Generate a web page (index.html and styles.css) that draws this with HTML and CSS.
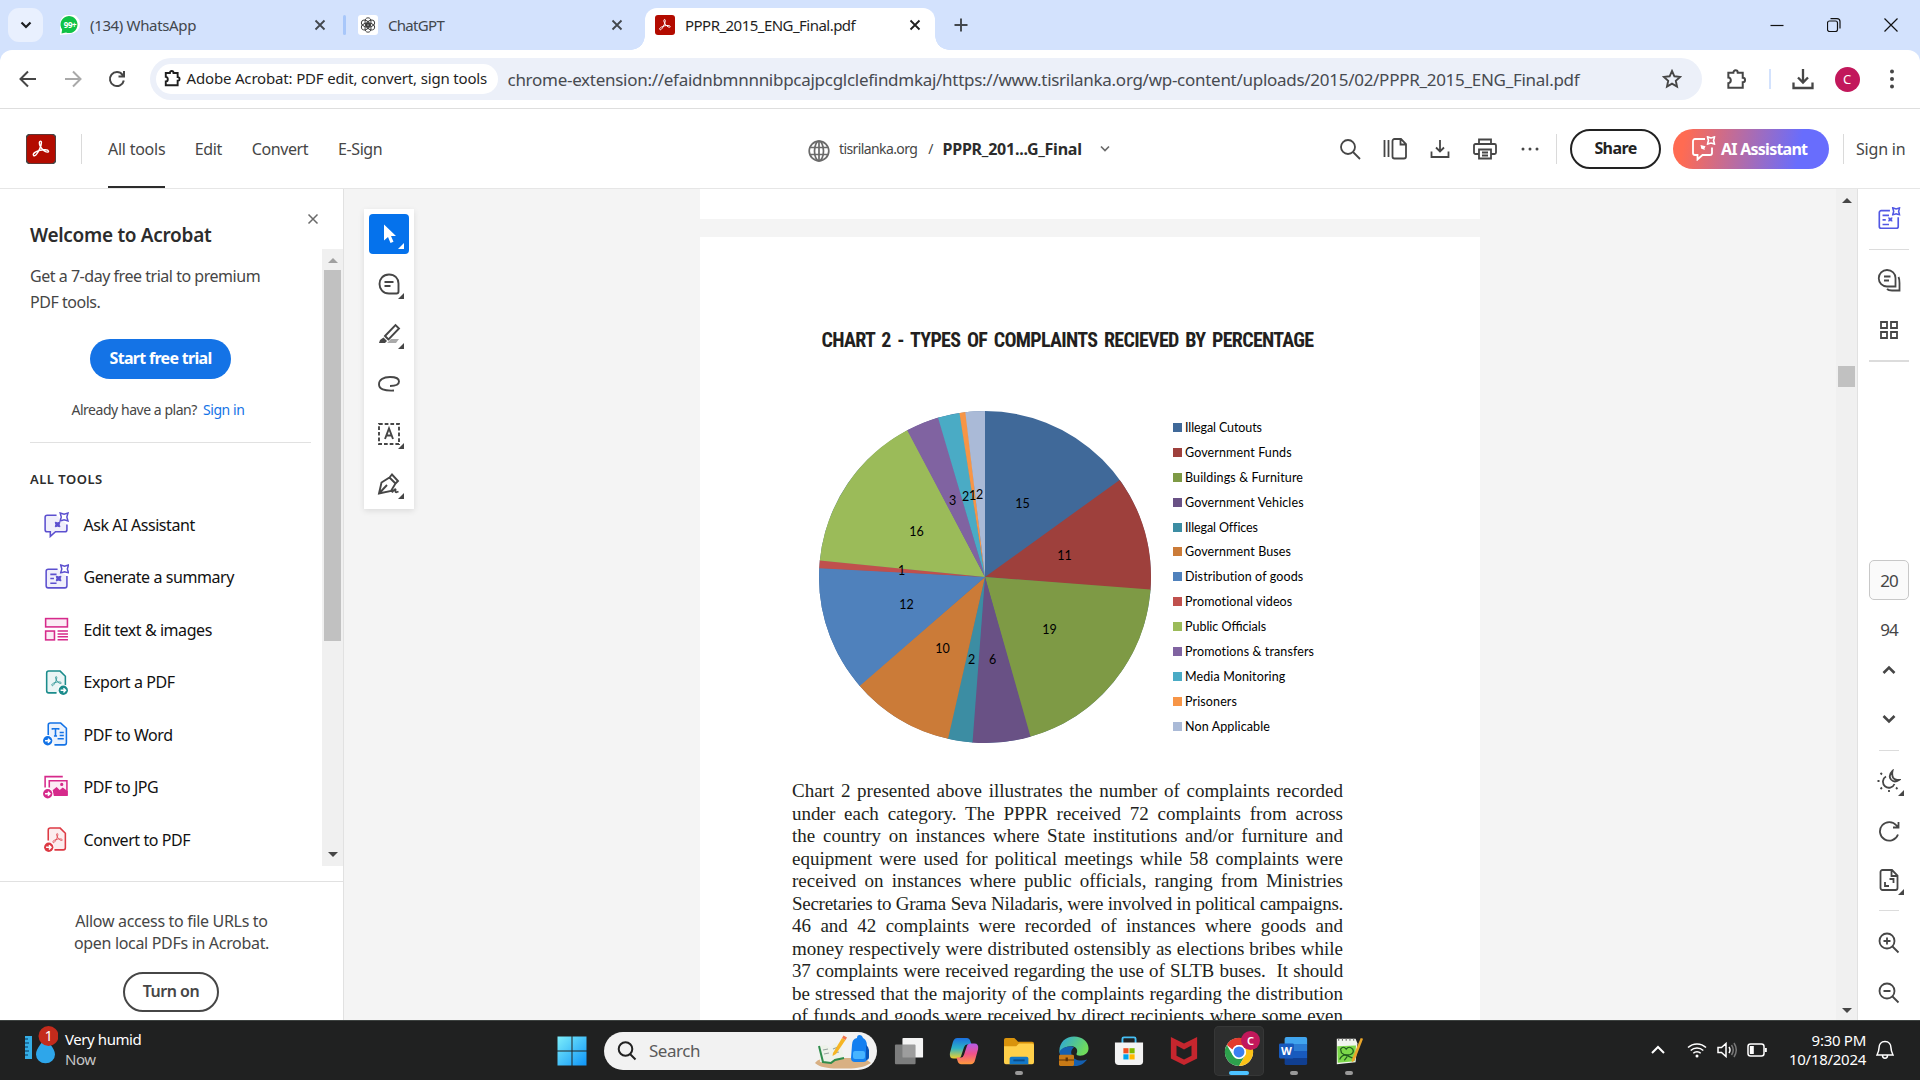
FILE: index.html
```html
<!DOCTYPE html>
<html lang="en">
<head>
<meta charset="utf-8">
<title>PPPR_2015_ENG_Final.pdf</title>
<link rel="stylesheet" href="styles.css">
</head>
<body>
<svg class="defs" aria-hidden="true">
  <symbol id="x" viewBox="0 0 12 12"><path d="M1.5 1.5l9 9M10.5 1.5l-9 9"/></symbol>
  <symbol id="puzzle" viewBox="0 0 24 24"><path d="M3.5 5h5.2c0-3.4 4.6-3.4 4.6 0h5.2v5.2c3.2 0 3.2 4.6 0 4.6V20.500h-15v-4.700c3.400 0 3.400-5.800 0-5.800z"/></symbol>
  <symbol id="trefoil" viewBox="0 0 24 24"><path d="M3 19.500c-1.500-2 3.500-5 8-6 4-1 9.500-1 10 1 .4 2-3 1.500-5.500-.5C12.500 11.500 10 7 10 4.500 10 2 12.500 1.700 12.500 4.500c0 4-3.500 11-6 14-1.200 1.500-2.700 2.200-3.500 1z"/></symbol>
  <symbol id="corner" viewBox="0 0 6 6"><path d="M6 0v6H0z"/></symbol>
  <symbol id="spark" viewBox="0 0 10 10"><path d="M1 1l4 1.200L9 1 7.800 5 9 9 5 7.800 1 9l1.200-4z"/></symbol>
  <symbol id="go" viewBox="0 0 12 12"><circle class="ring" cx="6" cy="6" r="6"/><circle cx="6" cy="6" r="4.900"/><path class="arrow" d="M3.200 6h5M6.200 3.800L8.400 6 6.200 8.200"/></symbol>
  <symbol id="down" viewBox="0 0 20 20"><path d="M10 1v11M6 8.500l4 4 4-4M1.500 12.500V18h17v-5.500"/></symbol>
</svg>

<header class="tabstrip">
  <button class="tabsearch"><svg width="12" height="12" viewBox="0 0 12 12"><path d="M1.500 3.500L6 8l4.500-4.500"/></svg></button>
  <div class="tab">
    <svg width="20" height="20" viewBox="0 0 20 20"><path d="M0 20V10A10 10 0 1 1 10 19z" fill="#fff"/><path d="M1.500 18.500l.6-4A8.500 8.500 0 1 1 6 17.500z" fill="#10c246"/><text x="10" y="13" class="wa">99+</text></svg>
    <span class="t-wa">(134) WhatsApp</span>
    <svg class="close" width="12" height="12"><use href="#x"/></svg>
  </div>
  <i class="tabline"></i>
  <div class="tab second">
    <svg width="20" height="20" viewBox="0 0 20 20"><rect width="20" height="20" rx="3" fill="#fff"/><g class="knot"><ellipse cx="10" cy="7" rx="3" ry="4.200"/><ellipse cx="10" cy="7" rx="3" ry="4.200" transform="rotate(60 10 10)"/><ellipse cx="10" cy="7" rx="3" ry="4.200" transform="rotate(120 10 10)"/><ellipse cx="10" cy="7" rx="3" ry="4.200" transform="rotate(180 10 10)"/><ellipse cx="10" cy="7" rx="3" ry="4.200" transform="rotate(240 10 10)"/><ellipse cx="10" cy="7" rx="3" ry="4.200" transform="rotate(300 10 10)"/></g></svg>
    <span class="t-gpt">ChatGPT</span>
    <svg class="close" width="12" height="12"><use href="#x"/></svg>
  </div>
  <div class="tab active">
    <svg width="20" height="20" viewBox="0 0 20 20"><rect width="20" height="20" rx="3" fill="#b30b00"/><use href="#trefoil" x="3" y="3" width="14" height="14" class="tre"/></svg>
    <span class="t-pdf">PPPR_2015_ENG_Final.pdf</span>
    <svg class="close" width="12" height="12"><use href="#x"/></svg>
  </div>
  <svg class="plus" width="14" height="14" viewBox="0 0 14 14"><path d="M7 .500v13M.500 7h13"/></svg>
  <div class="wincontrols">
    <svg width="14" height="14" viewBox="0 0 14 14"><path d="M.500 7.500h13"/></svg>
    <svg width="14" height="14" viewBox="0 0 14 14"><rect x=".500" y="3" width="10" height="10.500" rx="2"/><path d="M3.500.600H10a3 3 0 0 1 3 3v7"/></svg>
    <svg width="14" height="14" viewBox="0 0 14 14"><path d="M.500.500l13 13M13.500.500l-13 13"/></svg>
  </div>
</header>

<div class="toolbar-wrap">
<nav class="toolbar">
  <svg class="nav" width="18" height="18" viewBox="0 0 18 18"><path d="M17 9H2M9 1.500L1.500 9 9 16.500"/></svg>
  <svg class="nav off" width="18" height="18" viewBox="0 0 18 18"><path d="M1 9h15M9 1.500L16.500 9 9 16.500"/></svg>
  <svg class="nav" width="18" height="18" viewBox="0 0 18 18"><path d="M15.800 10.500a7 7 0 1 1-1.300-5.700L16 6.500M16 1v5.500h-5.500"/></svg>
  <div class="omnibox">
    <span class="chip"><svg width="19" height="19"><use href="#puzzle"/></svg><span>Adobe Acrobat: PDF edit, convert, sign tools</span></span>
    <span class="url">chrome-extension://efaidnbmnnnibpcajpcglclefindmkaj/https://www.tisrilanka.org/wp-content/uploads/2015/02/PPPR_2015_ENG_Final.pdf</span>
    <svg class="star" width="20" height="20" viewBox="0 0 20 20"><path d="M10 2l2.400 5.300 5.700.600-4.300 3.900 1.200 5.700-5-2.900-5 2.900 1.200-5.700L1.900 7.900l5.700-.600z"/></svg>
  </div>
  <svg class="ext" width="23" height="23"><use href="#puzzle"/></svg>
  <i class="toolline"></i>
  <svg class="dl" width="22" height="22" viewBox="0 0 22 22"><path d="M11 1v13M6 9.500l5 5 5-5M1.500 14.500V20h19v-5.500"/></svg>
  <span class="avatar">C</span>
  <svg class="kebab" width="6" height="20" viewBox="0 0 6 20"><circle cx="3" cy="2.500" r="2"/><circle cx="3" cy="10" r="2"/><circle cx="3" cy="17.500" r="2"/></svg>
</nav>
</div>

<header class="acro">
  <div class="acro-left">
    <svg width="30" height="30" viewBox="0 0 30 30"><rect width="30" height="30" rx="5" fill="#b30b00"/><use href="#trefoil" x="5" y="5" width="20" height="20" class="tre"/></svg>
    <i class="vline"></i>
    <a class="sel">All tools</a><a>Edit</a><a>Convert</a><a>E-Sign</a>
  </div>
  <div class="acro-mid">
    <svg width="22" height="22" viewBox="0 0 22 22"><circle cx="11" cy="11" r="9.800"/><ellipse cx="11" cy="11" rx="4.500" ry="9.800"/><path d="M11 1v20M1.800 7.500h18.400M1.800 14.500h18.400"/></svg>
    <span class="site">tisrilanka.org</span><span class="slash">/</span><b>PPPR_201...G_Final</b>
    <svg class="chev" width="10" height="8" viewBox="0 0 10 8"><path d="M1 1.500l4 4 4-4"/></svg>
  </div>
  <div class="acro-right">
    <svg width="22" height="22" viewBox="0 0 22 22"><circle cx="9" cy="9" r="7"/><path d="M14 14l7 7"/></svg>
    <svg width="24" height="22" viewBox="0 0 24 22"><path d="M1.500 2v17M5.500 2v17M9.500 3a2 2 0 0 1 2-2h6.500l5 5v12.500a2 2 0 0 1-2 2h-9.500a2 2 0 0 1-2-2zM17.500 1.500V6.500H23"/></svg>
    <svg class="save" width="20" height="20"><use href="#down"/></svg>
    <svg width="24" height="22" viewBox="0 0 24 22"><path d="M6 6V1.500h12V6M5.500 16H2.500a1.500 1.500 0 0 1-1.500-1.500V7.500A1.500 1.500 0 0 1 2.500 6h19A1.500 1.500 0 0 1 23 7.500v7a1.500 1.500 0 0 1-1.500 1.500h-3M6 11.500h12V20.500H6zM9 14.500h6M9 17.500h6"/></svg>
    <svg class="dots" width="18" height="6" viewBox="0 0 18 6"><circle cx="2" cy="3" r="1.500"/><circle cx="9" cy="3" r="1.500"/><circle cx="16" cy="3" r="1.500"/></svg>
    <i class="vline"></i>
    <button class="share">Share</button>
    <button class="ai"><svg width="25" height="25" viewBox="0 0 25 25"><path d="M14 3H4a2 2 0 0 0-2 2v12a2 2 0 0 0 2 2h2.500v4.500L11.500 19H19a2 2 0 0 0 2-2v-5.500"/><use href="#spark" x="15.500" y="0" width="9" height="9"/><path class="f" d="M9.500 9l5 1.200L13.300 13l1 1-4-1.200z"/></svg><span>AI Assistant</span></button>
    <i class="vline last"></i>
    <a>Sign in</a>
  </div>
</header>

<main>
  <aside class="side">
    <div class="side-top">
      <h1>Welcome to Acrobat</h1>
      <svg width="12" height="12"><use href="#x"/></svg>
    </div>
    <div class="side-body">
      <div class="side-content">
        <p class="intro">Get a 7-day free trial to premium<br>PDF tools.</p>
        <button class="trial">Start free trial</button>
        <p class="plan">Already have a plan?<a>Sign in</a></p>
        <h2>ALL TOOLS</h2>
        <ul class="tools">
          <li><svg class="purple" viewBox="0 0 26 26"><path class="t" d="M14 4H5a2 2 0 0 0-2 2v12a2 2 0 0 0 2 2h3v4.500L13 20h9a2 2 0 0 0 2-2v-5"/><use href="#spark" x="16.500" y="1" width="9.500" height="9.500"/><use href="#spark" x="12" y="10" width="6" height="6" class="solid"/></svg><span>Ask AI Assistant</span></li>
          <li><svg class="purple" viewBox="0 0 26 26"><path class="t" d="M15 5H6a2 2 0 0 0-2 2v14a2 2 0 0 0 2 2h16a2 2 0 0 0 2-2v-9.500"/><path d="M8 10h6M8 14h3.500M8 18.500h6"/><use href="#spark" x="17" y="0" width="9.500" height="9.500"/><use href="#spark" x="13" y="11" width="6" height="6" class="solid"/></svg><span>Generate a summary</span></li>
          <li><svg class="pink" viewBox="0 0 26 26"><rect class="t" x="3.500" y="2.500" width="21" height="8"/><rect class="t" x="3.500" y="14.500" width="8.500" height="8.500"/><path d="M15 14.500h10M15 17.300h10M15 20h10M15 22.900h10"/></svg><span>Edit text &amp; images</span></li>
          <li><svg class="teal" viewBox="0 0 26 26"><path class="t" d="M14 23H6.500a2 2 0 0 1-2-2V4a2 2 0 0 1 2-2h11l5 5v9"/><use href="#trefoil" x="8" y="6" width="12" height="12"/><use href="#go" x="15" y="15" width="11" height="11" class="go"/></svg><span>Export a PDF</span></li>
          <li><svg class="blue" viewBox="0 0 26 26"><path class="t" d="M6 14V4a2 2 0 0 1 2-2h10l5.500 5v14a2 2 0 0 1-2 2H12"/><path d="M10 8.500V7.500h6v1M13 7.500v7M11.500 14.500h3M17 11h4M17 14h4M15 17h6"/><use href="#go" x="0" y="13.500" width="11" height="11" class="go"/></svg><span>PDF to Word</span></li>
          <li><svg class="pink" viewBox="0 0 26 26"><path d="M3 13V2.500h17"/><path class="t" d="M7 13V6.500h17V20H12"/><path class="f" d="M11 16l3-2.500 3 3 3-2.500 4 3v3.500H12z"/><circle cx="19" cy="10" r=".8"/><use href="#go" x="0" y="13.500" width="11" height="11" class="go"/></svg><span>PDF to JPG</span></li>
          <li><svg class="red" viewBox="0 0 26 26"><path class="t" d="M6 14V4a2 2 0 0 1 2-2h9.500l5 5v14a2 2 0 0 1-2 2H12"/><use href="#trefoil" x="9" y="6" width="12" height="12"/><use href="#go" x="1" y="15" width="11" height="11" class="go"/></svg><span>Convert to PDF</span></li>
        </ul>
      </div>
      <div class="scroll side-scroll"><i class="up dim"></i><b></b><i class="down"></i></div>
    </div>
    <footer class="allow">
      <p>Allow access to file URLs to<br>open local PDFs in Acrobat.</p>
      <button>Turn on</button>
    </footer>
  </aside>

  <section class="viewer">
    <div class="quick">
      <span class="on"><svg width="40" height="40" viewBox="0 0 40 40"><path d="M15 10.500v16l4-3.500 2.500 6 3-1.300-2.500-5.700h5z" fill="#fff"/></svg><svg class="corner"><use href="#corner"/></svg></span>
      <span><svg width="24" height="24" viewBox="0 0 24 24"><path d="M12 2.500c6 0 9.500 4 9.500 9v8a2 2 0 0 1-2 2H12C6 21.500 2.500 17 2.500 12S6 2.500 12 2.500zM7.500 10h9M7.500 14h6"/></svg><svg class="corner"><use href="#corner"/></svg></span>
      <span><svg width="24" height="24" viewBox="0 0 24 24"><path d="M14 17h8l-3 4H10z" fill="#aaa" stroke="none"/><path d="M8 14L18.500 3l3.500 3.500L11.500 17.500zM8 14l3.500 3.500"/><path d="M6.500 15.500l3.500 3.500-2 2H2l1-3z" fill="#464646" stroke="none"/></svg><svg class="corner"><use href="#corner"/></svg></span>
      <span><svg width="24" height="24" viewBox="0 0 24 24"><path d="M13 14c5 0 9-1.500 9-4.500C22 6.500 18 5 13 5 6 5 2 8 2 12.500S7 19 17 18.500"/></svg></span>
      <span><svg width="24" height="24" viewBox="0 0 24 24"><rect x="2" y="2" width="20" height="20" stroke-dasharray="3.700 2"/><path d="M8 17l4-10.500L16 17M9.500 13.500h5"/></svg><svg class="corner"><use href="#corner"/></svg></span>
      <span><svg width="24" height="24" viewBox="0 0 24 24"><path d="M2 21.500L4.500 10.500 12.500 5.500l6 6-4.500 7.500zM2 21.500l8-8.500M12.500 5.500L15 2.500 21 9l-2.500 2.500M15 20.500c2-3 4-4 3.500-2.500-.5 2 0 3 3 1.500"/></svg><svg class="corner"><use href="#corner"/></svg></span>
    </div>
    <div class="pages">
      <div class="sheet prev"></div>
      <article class="sheet">
        <h3>CHART 2 - TYPES OF COMPLAINTS RECIEVED BY PERCENTAGE</h3>
        <div class="chart">
          <svg class="pie" width="332" height="332" viewBox="-166 -166 332 332">
            <g class="slices" transform="rotate(-90)">
              <circle r="83" pathLength="360" stroke="#406999"/>
              <circle r="83" pathLength="360" stroke="#9e403c" stroke-dasharray="40.500 360" stroke-dashoffset="-54.200"/>
              <circle r="83" pathLength="360" stroke="#7e9a45" stroke-dasharray="69.900 360" stroke-dashoffset="-94.400"/>
              <circle r="83" pathLength="360" stroke="#695185" stroke-dasharray="20.600 360" stroke-dashoffset="-164"/>
              <circle r="83" pathLength="360" stroke="#3c8da3" stroke-dasharray="8.700 360" stroke-dashoffset="-184.400"/>
              <circle r="83" pathLength="360" stroke="#cb7b38" stroke-dasharray="36.300 360" stroke-dashoffset="-192.900"/>
              <circle r="83" pathLength="360" stroke="#4f81bc" stroke-dasharray="44.300 360" stroke-dashoffset="-229"/>
              <circle r="83" pathLength="360" stroke="#c0504d" stroke-dasharray="2.900 360" stroke-dashoffset="-273.100"/>
              <circle r="83" pathLength="360" stroke="#9bbb59" stroke-dasharray="56.400 360" stroke-dashoffset="-275.800"/>
              <circle r="83" pathLength="360" stroke="#8063a1" stroke-dasharray="11.700 360" stroke-dashoffset="-332"/>
              <circle r="83" pathLength="360" stroke="#4aabc5" stroke-dasharray="7.800 360" stroke-dashoffset="-343.500"/>
              <circle r="83" pathLength="360" stroke="#f79546" stroke-dasharray="2.200 360" stroke-dashoffset="-351.100"/>
              <circle r="83" pathLength="360" stroke="#aabad7" stroke-dasharray="6.900 360" stroke-dashoffset="-353.100"/>
            </g>
            <g class="nums">
              <text x="37.500" y="-69">15</text><text x="79.500" y="-17">11</text><text x="64.500" y="57">19</text><text x="7.500" y="87">6</text><text x="-13.500" y="87">2</text><text x="-42.500" y="76">10</text><text x="-78.500" y="32">12</text><text x="-83.500" y="-2">1</text><text x="-68.500" y="-41">16</text><text x="-32.500" y="-72">3</text><text x="-19.500" y="-76">2</text><text x="-12.500" y="-77">1</text><text x="-5.500" y="-78">2</text>
            </g>
          </svg>
          <ul class="legend">
            <li class="c1">Illegal Cutouts</li><li class="c2">Government Funds</li><li class="c3">Buildings &amp; Furniture</li><li class="c4">Government Vehicles</li><li class="c5">Illegal Offices</li><li class="c6">Government Buses</li><li class="c7">Distribution of goods</li><li class="c8">Promotional videos</li><li class="c9">Public Officials</li><li class="c10">Promotions &amp; transfers</li><li class="c11">Media Monitoring</li><li class="c12">Prisoners</li><li class="c13">Non Applicable</li>
          </ul>
        </div>
        <div class="prose">
          <p>Chart 2 presented above illustrates the number of complaints recorded</p>
          <p>under each category. The PPPR received 72 complaints from across</p>
          <p>the country on instances where State institutions and/or furniture and</p>
          <p>equipment were used for political meetings while 58 complaints were</p>
          <p>received on instances where public officials, ranging from Ministries</p>
          <p class="tight">Secretaries to Grama Seva Niladaris, were involved in political campaigns.</p>
          <p>46 and 42 complaints were recorded of instances where goods and</p>
          <p>money respectively were distributed ostensibly as elections bribes while</p>
          <p class="close-set">37 complaints were received regarding the use of SLTB buses.&nbsp; It should</p>
          <p class="snug">be stressed that the majority of the complaints regarding the distribution</p>
          <p>of funds and goods were received by direct recipients where some even</p>
        </div>
      </article>
    </div>
    <div class="scroll doc-scroll"><i class="up"></i><b></b><i class="down"></i></div>
  </section>

  <aside class="rail">
    <svg class="r-sum" width="24" height="24" viewBox="0 0 26 26"><path d="M14 4H4.500a2 2 0 0 0-2 2v15a2 2 0 0 0 2 2H21a2 2 0 0 0 2-2V11M6 9h7M6 14h3.500M6 19h7"/><use href="#spark" x="16" y="0" width="9.500" height="9.500"/><use href="#spark" x="12" y="11" width="5" height="5" class="solid"/></svg>
    <i class="l1"></i>
    <svg class="r-com" width="24" height="24" viewBox="0 0 24 24"><path d="M10 2c5 0 8.500 3.500 8.500 8v8.500H10A8.200 8.200 0 1 1 10 2zM7 8.500h6.500M7 12.500h5M21.500 9c1 2 1 4 1 6v7.500H15c-2 0-3.500 0-5-1.500"/></svg>
    <svg class="r-grid" width="20" height="20" viewBox="0 0 20 20"><path d="M2 2h6v6H2zM12 2h6v6h-6zM2 12h6v6H2zM12 12h6v6h-6z"/></svg>
    <i class="l2"></i>
    <span class="pg">20</span>
    <span class="tot">94</span>
    <svg class="r-up" width="14" height="10" viewBox="0 0 14 10"><path d="M1.500 8L7 2.500 12.500 8"/></svg>
    <svg class="r-dn" width="14" height="10" viewBox="0 0 14 10"><path d="M1.500 2L7 7.500 12.500 2"/></svg>
    <i class="l3"></i>
    <span class="r-sun"><svg width="24" height="24" viewBox="0 0 24 24"><path d="M9 7.500a6 6 0 1 0 8.500 7.500M15.500 2c-3 3-3.500 6-1.500 8.500 2 2.200 5 2.500 8 .5-3 0-5-.7-6-2.500-1-2-1-4-.5-6.500zM3.500 4L5 5.500M.500 12h2M3.500 20L5 18.500M12 21v2M19 18.500l1.500 1.500"/></svg><svg class="corner"><use href="#corner"/></svg></span>
    <svg class="r-rot" width="22" height="22" viewBox="0 0 22 22"><path d="M20 14.500A9.300 9.300 0 1 1 18.500 5.500L20.500 7.500M20.500 2v5.500H15"/></svg>
    <span class="r-fit"><svg width="22" height="24" viewBox="0 0 22 24"><path d="M2.500 4a2 2 0 0 1 2-2H14l5.500 5.500V20a2 2 0 0 1-2 2h-13a2 2 0 0 1-2-2zM13.500 2.500V8H19M11.500 11h4v4M7 14v4h4"/></svg><svg class="corner"><use href="#corner"/></svg></span>
    <i class="l4"></i>
    <svg class="r-zin" width="22" height="22" viewBox="0 0 22 22"><circle cx="9" cy="9" r="7.500"/><path d="M14.500 14.500l6 6M5.500 9h7M9 5.500v7"/></svg>
    <svg class="r-zout" width="22" height="22" viewBox="0 0 22 22"><circle cx="9" cy="9" r="7.500"/><path d="M14.500 14.500l6 6M5.500 9h7"/></svg>
  </aside>
</main>

<footer class="taskbar">
  <div class="weather">
    <svg width="34" height="42" viewBox="0 0 34 42"><rect x="1" y="12" width="7" height="23" fill="#35aee6"/><path class="ticks" d="M1 15h3M1 19h4M1 23h3M1 27h4M1 31h3"/><path d="M21.500 13c2 5 9.500 11 9.500 17.500a9.300 8.500 0 0 1-19 0C12 24 19 18 21.500 13z" fill="#2ea6ea"/><circle cx="24.500" cy="12" r="10" fill="#c42b1c"/><text x="24.500" y="17">1</text></svg>
    <div><p>Very humid</p><p class="now">Now</p></div>
  </div>
  <div class="apps">
    <svg class="start" width="30" height="30" viewBox="0 0 30 30"><defs><linearGradient id="wg" x1="0" y1="0" x2="30" y2="30" gradientUnits="userSpaceOnUse"><stop offset="0" stop-color="#7ff0fb"/><stop offset="1" stop-color="#0c93f7"/></linearGradient></defs><path d="M.500.500h14v14H.500zM15.500.500h14v14h-14zM.500 15.500h14v14H.500zM15.500 15.500h14v14h-14z" fill="url(#wg)"/></svg>
    <div class="search"><svg class="mag" width="20" height="20" viewBox="0 0 20 20"><circle cx="8.500" cy="8" r="6.800"/><path d="M13 13l5.500 5.500"/></svg><span>Search</span>
      <svg class="art" width="58" height="36" viewBox="0 0 58 36"><path d="M1 30q2-3 6-4l3-1h38l5 2 4 3c-5 3-10 5-20 5.500H20C10 35 4 33 1 30z" fill="#d8b083"/><path d="M5 13l7-1 4 3 6-5 5 1 3 14-9 1-6 4-9-1z" fill="#eef2ea"/><path class="cover" d="M5 13l4 16 8 1 4-3 9-2"/><path class="lines" d="M9 17l5-1M10 21l5-1M19 16l5-2M20 20l5-1"/><path d="M19 20L28 5l3.500 2-9.500 14-3.500 2z" fill="#f6b523"/><path d="M28 5l1.500-2.500 3.500 2L31.500 7z" fill="#f0734c"/><path d="M38 12q0-6 5-7 0-3 2.500-3T49 5q4 2 4 8v13q0 3-4 3h-8q-4 0-4-4z" fill="#137ff0"/><path d="M52 12q3 2 3 5v7q0 3-3 3z" fill="#0a55b8"/><rect x="39" y="18" width="12" height="8" rx="2" fill="#48b4ff"/></svg></div>
    <span class="app"><svg viewBox="0 0 32 32"><rect x="9" y="2" width="22" height="21" rx="1" fill="#f4f4f4"/><rect x="1" y="9" width="22" height="21" rx="1" fill="#8d8d8d" fill-opacity=".85"/></svg></span>
    <span class="app"><svg viewBox="0 0 32 32"><defs><linearGradient id="c1" x1="0" y1="0" x2="0" y2="1"><stop offset="0" stop-color="#1b6fe0"/><stop offset=".5" stop-color="#2cb2c8"/><stop offset="1" stop-color="#f0d02c"/></linearGradient><linearGradient id="c2" x1="0" y1="0" x2="0" y2="1"><stop offset="0" stop-color="#b45be8"/><stop offset=".5" stop-color="#f0528a"/><stop offset="1" stop-color="#ff9a3c"/></linearGradient></defs><path d="M9 2h10q3 0 4 4l1 3h-5q-2 0-3 3l-3 9q-1 3-4 3H5q-5 0-4-6L4 7q1-5 5-5z" fill="url(#c1)"/><path d="M23 30H13q-3 0-4-4l-1-3h5q2 0 3-3l3-9q1-3 4-3h4q5 0 4 6l-3 11q-1 5-5 5z" fill="url(#c2)"/></svg></span>
    <span class="app run"><svg viewBox="0 0 32 32"><path d="M0 4q0-2 2-2h9l4 4h15q2 0 2 2v4H0z" fill="#d9930c"/><path d="M0 11h13l3-3h14q2 0 2 2v18q0 2-2 2H2q-2 0-2-2z" fill="#ffd04a"/><path d="M6 30v-6q0-2 2-2h16q2 0 2 2v6z" fill="#1378c8"/><path class="slot" d="M10 26h12"/></svg></span>
    <span class="app"><svg viewBox="0 0 32 32"><defs><linearGradient id="e1" x1="0" y1="0" x2="1" y2=".4"><stop offset="0" stop-color="#2aa5e0"/><stop offset="1" stop-color="#6fdb5c"/></linearGradient></defs><path d="M.5 18C-.5 7 7 .500 16 .500c9 0 15.500 6 15.500 12.500 0 5-4 8-9 8-3.500 0-4.500-1-3.500-3 1.500-4-1.500-7-6-7-6 0-10 3-12.500 7z" fill="url(#e1)"/><path d="M13 11c-8 0-12.500 4-12.500 7C2 27 9 32 17 32c6 0 10-3 13-7-8 3-16 0-17-7 0-3 1-4 3-6z" fill="#1560b0"/><rect x="0" y="20" width="16" height="12" rx="1.500" fill="#c87a16"/><path d="M0 25h16v1H0zM7 23h2.500v4H7z" fill="#5f3205"/></svg></span>
    <span class="app"><svg viewBox="0 0 32 32"><path class="handle" d="M9 8V3q0-1.500 1.500-1.500h11Q23 1.500 23 3v5"/><path d="M1 7h30v20q0 4-4 4H5q-4 0-4-4z" fill="#f3f3f3"/><path d="M10 13h5.500v5.500H10z" fill="#f25022"/><path d="M16.500 13H22v5.500h-5.500z" fill="#7fba00"/><path d="M10 19.500h5.500V25H10z" fill="#00a4ef"/><path d="M16.500 19.500H22V25h-5.500z" fill="#ffb900"/></svg></span>
    <span class="app"><svg viewBox="0 0 32 32"><path d="M2 1l14 7 14-7v23l-14 7-14-7zM8 10v11l8 4 8-4V10l-8 4.500z" fill="#c6262e" fill-rule="evenodd"/></svg></span>
    <span class="app cur"><svg viewBox="0 0 32 32"><circle cx="16" cy="17" r="15" fill="#fff"/><path d="M3 9.500A15 15 0 0 1 29 9.500H16a7.500 7.500 0 0 0-7 5z" fill="#e33b2e"/><path d="M3 9.500A15 15 0 0 0 16 32l6.500-11.300A7.500 7.500 0 0 1 9.500 20.700z" fill="#2da14c"/><path d="M29 9.500A15 15 0 0 1 16 32l6.500-11.200A7.500 7.500 0 0 0 16 9.500z" fill="#fbc116"/><circle cx="16" cy="17" r="7.300" fill="#fff"/><circle cx="16" cy="17" r="5.800" fill="#3b7ff0"/></svg><em>C</em></span>
    <span class="app run"><svg viewBox="0 0 32 32"><path d="M8 1h20q2 0 2 2v6H6V3q0-2 2-2z" fill="#41a5ee"/><path d="M6 8.500h24V16H6z" fill="#2b7cd3"/><path d="M6 16h24v7.500H6z" fill="#185abd"/><path d="M6 23.500h24V29q0 2-2 2H8q-2 0-2-2z" fill="#103f91"/><rect x="0" y="8" width="16" height="16" rx="1.500" fill="#185abd"/><text x="8" y="20.500">W</text></svg></span>
    <span class="app run"><svg viewBox="0 0 32 32"><path d="M3 3h20l2 5-2 20-20 2z" fill="#f1f4ee"/><path d="M3.500 11l20-1-1.500 17-18 1.500z" fill="#7bd84a"/><path class="rings" d="M5 2v3M9 2v3M13 2v3M17 2v3M21 2v3"/><path class="frog" d="M7 14q3-4 6 0 3-4 7 0 2 4-3 6-6 1-9-2zM6 25q3-6 8-4t7 3M11 26l3-4"/><path d="M19 25L28.500 2l2.500 1L22 26l-3 2z" fill="#e9a52a"/></svg></span>
  </div>
  <div class="tray">
    <svg class="tc" width="14" height="10" viewBox="0 0 14 10"><path d="M1 8l6-6 6 6"/></svg>
    <svg width="20" height="16" viewBox="0 0 20 16"><path d="M1 5.500a13 13 0 0 1 18 0M3.700 8.500a9 9 0 0 1 12.600 0M6.300 11.300a5.300 5.300 0 0 1 7.400 0"/><circle cx="10" cy="14" r="1.500" fill="#fff" stroke="none"/></svg>
    <svg width="20" height="16" viewBox="0 0 20 16"><path d="M1 5.500h3.500L9 1.500v13l-4.500-4H1zM12 5q2 3 0 6"/><path d="M14.500 3q3.500 5 0 10M17 1q4.500 7 0 14" stroke="#777"/></svg>
    <svg width="20" height="14" viewBox="0 0 20 14"><rect x="1" y="1" width="16" height="12" rx="2.500"/><path d="M18.800 5v4" stroke-width="2"/><rect x="2.800" y="3" width="4" height="8" fill="#fff" stroke="none"/></svg>
    <div class="clock"><p>9:30 PM</p><p class="date">10/18/2024</p></div>
    <svg class="bell" width="18" height="20" viewBox="0 0 18 20"><path d="M9 1.500c-4 0-6 3-6 6.500 0 3-1 5-2 7h16c-1-2-2-4-2-7 0-3.500-2-6.500-6-6.500zM6.500 15.500c0 3.500 5 3.500 5 0"/></svg>
  </div>
</footer>
</body>
</html>
```
FILE: styles.css
```css
* { box-sizing: border-box; }
body {
  margin: 0; width: 1920px; height: 1080px; overflow: hidden;
  display: flex; flex-direction: column;
  font-family: "Noto Sans", "Open Sans", sans-serif; color: #464646; background: #fff;
}
h1, h2, h3, p, ul { margin: 0; padding: 0; list-style: none; font-weight: 400; }
button { border: 0; background: none; padding: 0; font: inherit; color: inherit; }
svg { fill: none; stroke: currentColor; stroke-width: 1.6; flex: none; display: block; }
span, a, b, p, button { white-space: nowrap; }
.defs { position: absolute; width: 0; height: 0; }
.tre { stroke: #fff; stroke-width: 1.7; }

/* tab strip */
.tabstrip { height: 50px; background: #d3e2fd; display: flex; align-items: center; flex: none; padding-left: 8px; color: #42474d; font-size: 15px; }
.tabsearch { width: 35px; height: 34px; border-radius: 11px; background: #e9f0fe; display: grid; place-items: center; color: #1c1e21; }
.tabsearch svg { stroke-width: 2.2; }
.tab { display: flex; align-items: center; gap: 10px; width: 283px; padding-left: 17px; }
.tab svg { stroke: none; }
.tab .close { margin-left: auto; margin-right: 0; stroke: #42474d; stroke-width: 1.8; }
.knot { fill: none; stroke: #333; stroke-width: .9; }
.wa { font: 700 8px "Noto Sans", sans-serif; fill: #fff; text-anchor: middle; letter-spacing: -.4px; }
.tabline { width: 3px; height: 20px; border-radius: 2px; background: #a8c7fa; margin-left: 17px; }
.tab.second { width: 277px; padding-left: 12px; }
.tab.active { position: relative; width: 290px; height: 42px; margin: 8px 0 0 22px; align-self: flex-start; background: #fff; border-radius: 12px 12px 0 0; padding: 0 14px 8px 10px; color: #1f1f1f; }
.tab.active .close { stroke: #1f1f1f; }
.tab.active .tre { stroke: #fff; }
.tab.active::before, .tab.active::after { content: ""; position: absolute; bottom: 0; width: 14px; height: 14px; }
.tab.active::before { left: -14px; background: radial-gradient(circle at 0 0, transparent 13.5px, #fff 14px); }
.tab.active::after { right: -14px; background: radial-gradient(circle at 100% 0, transparent 13.5px, #fff 14px); }
.t-wa { letter-spacing: -.35px; }
.t-gpt { letter-spacing: -.7px; }
.t-pdf { letter-spacing: -.53px; }
.plus { margin-left: 19px; color: #42474d; stroke-width: 1.9; }
.wincontrols { margin-left: auto; display: flex; gap: 43px; margin-right: 22px; color: #111; }
.wincontrols svg { stroke-width: 1.2; }

/* address bar */
.toolbar-wrap { background: #d3e2fd; flex: none; }
.toolbar { height: 59px; background: #fff; border-radius: 12px 12px 0 0; border-bottom: 1px solid #dedede; display: flex; align-items: center; padding-left: 19px; color: #464646; }
.nav { margin-right: 26.5px; stroke-width: 2; }
.nav.off { color: #a9a9a9; }
.omnibox { width: 1552px; height: 42px; border-radius: 21px; background: #ecf0f9; display: flex; align-items: center; padding: 0 20px 0 6px; margin-left: -3px; }
.chip { height: 30px; width: 342px; border-radius: 15px; background: #fff; display: flex; align-items: center; gap: 5px; padding: 0 0 2px 7px; color: #1f1f1f; font-size: 15px; letter-spacing: -.17px; }
.chip svg { stroke-width: 2.4; }
.url { margin-left: 10px; font-size: 17px; letter-spacing: -.28px; color: #474a50; }
.star { margin-left: auto; stroke-width: 1.9; }
.ext { margin-left: 23px; stroke-width: 2.1; }
.toolline { width: 2px; height: 20px; background: #d3e2fd; margin-left: 21px; }
.dl { margin-left: 21px; stroke-width: 2.3; }
.avatar { width: 25px; height: 25px; border-radius: 50%; background: #c2185b; color: #fff; font-size: 13px; display: grid; place-items: center; margin-left: 21px; }
.kebab { margin-left: 29px; fill: #464646; stroke: none; }

/* acrobat bar */
.acro { height: 80px; border-bottom: 1px solid #e6e6e6; display: flex; align-items: stretch; flex: none; font-size: 16px; }
.acro > div { display: flex; align-items: center; }
.acro-left { width: 808px; padding-left: 26px; }
.vline { width: 1px; height: 30px; background: #dadada; }
.acro-left .vline { margin: 0 26px 0 25px; }
.acro-left a { height: 79px; line-height: 81px; margin-right: 30px; letter-spacing: -.42px; }
.acro-left .sel { border-bottom: 2px solid #2c2c2c; letter-spacing: -.25px; margin-right: 29.5px; }
.acro-mid svg { stroke-width: 1.7; color: #6a6a6a; margin-top: 4px; }
.acro-mid { width: 400px; }
.site { font-size: 14px; margin-left: 9px; letter-spacing: -.6px; }
.slash { font-size: 14px; margin: 0 9px 0 11px; }
.acro-mid b { letter-spacing: -.24px; color: #2c2c2c; }
.acro-mid .chev { margin: 0 0 0 18px; }
.acro-right { margin-left: 131px; }
.acro-right svg { margin-right: 22px; stroke-width: 1.8; }
.acro-right .save { margin: 0 23px 0 1px; }
.acro-right .dots { fill: #464646; stroke: none; margin: 0 17px 0 2px; }
.share { width: 91px; height: 40px; border: 2px solid #222; border-radius: 20px; font-weight: 700; letter-spacing: -.6px; color: #222; margin-left: 13px; padding-bottom: 1px; }
.ai { width: 156px; height: 40px; border-radius: 20px; background: linear-gradient(100deg, #ff6b52 8%, #686dfd 80%); color: #fff; font-weight: 700; letter-spacing: -.75px; display: flex; align-items: center; margin: 0 14px 0 12px; padding-left: 18px; }
.ai svg { margin-right: 5px; }
.ai .f { fill: #fff; stroke: none; }
.acro-right .last { margin-right: 12px; }
.acro-right a { letter-spacing: -.2px; }

main { flex: 1; display: flex; min-height: 0; }

/* left panel */
.side { width: 344px; border-right: 1px solid #e1e1e1; display: flex; flex-direction: column; }
.side-top { height: 60px; display: flex; padding: 33px 24px 0 30px; justify-content: space-between; }
.side-top svg { margin-top: -9px; color: #6a6a6a; stroke-width: 1.5; }
h1 { font-size: 19px; line-height: 26px; font-weight: 600; letter-spacing: -.3px; color: #2c2c2c; }
.side-body { height: 617px; display: flex; justify-content: space-between; }
.side-content { padding-left: 30px; width: 311px; display: flex; flex-direction: column; }
.intro { font-size: 16px; line-height: 26px; letter-spacing: -.47px; margin-top: 14px; }
.trial { width: 141px; height: 40px; border-radius: 20px; background: #1473e6; color: #fff; font-weight: 700; font-size: 16px; letter-spacing: -.7px; margin: 24px 0 0 60px; padding-bottom: 1px; }
.plan { font-size: 14px; letter-spacing: -.46px; text-align: center; line-height: 20px; padding: 21px 0 22px; border-bottom: 1px solid #e1e1e1; padding-right: 25px; }
.plan a { color: #1473e6; margin-left: 6px; letter-spacing: -.4px; }
h2 { font-size: 13px; font-weight: 600; letter-spacing: .5px; color: #2c2c2c; line-height: 20px; margin-top: 26px; }
.tools { margin-top: 10px; }
.tools li { height: 52.5px; display: flex; align-items: center; font-size: 16px; letter-spacing: -.43px; color: #111; gap: 14.5px; padding-left: 12px; }
.tools svg { width: 27px; height: 27px; stroke-width: 1.5; }
.tools .t { fill: color-mix(in srgb, currentColor 9%, white); }
.tools .f, .solid { fill: currentColor; }
.go { fill: currentColor; stroke: none; }
.ring { fill: #fff; }
.arrow { stroke: #fff; stroke-width: 1.5; fill: none; }
.purple { color: #5c50cf; } .pink { color: #d62a8b; } .teal { color: #1b8c8c; } .blue { color: #1473e6; } .red { color: #dd3a44; }
.scroll { width: 21px; background: #f0f0f0; display: flex; flex-direction: column; align-items: center; }
.scroll i { width: 0; height: 0; border: 5px solid transparent; border-top-width: 0; border-bottom-width: 5px; border-bottom-color: #464646; }
.scroll .down { border-top: 5px solid #464646; border-bottom: 0; margin-top: auto; }
.scroll .dim { border-bottom-color: #a0a0a0; }
.scroll b { width: 17px; background: #c1c1c1; }
.side-scroll { padding: 9px 0; }
.side-scroll b { height: 371px; margin-top: 7px; }
.allow { margin-top: 15px; border-top: 1px solid #e1e1e1; flex: 1; padding: 27.5px 0 0; display: flex; flex-direction: column; align-items: center; font-size: 16px; }
.allow p { line-height: 22.5px; letter-spacing: -.32px; text-align: center; }
.allow button { width: 96px; height: 40px; border: 2px solid #464646; border-radius: 20px; font-weight: 600; letter-spacing: -.5px; margin: 17.5px 1px 0 0; padding-bottom: 2px; }

/* document area */
.viewer { width: 1514px; background: #f4f4f4; display: flex; align-items: flex-start; border-right: 1px solid #e1e1e1; overflow: hidden; }
.quick { width: 50px; height: 300px; background: #fff; margin: 20px 286px 0 20px; padding: 5px; display: flex; flex-direction: column; gap: 10px; box-shadow: 0 2px 6px rgba(0,0,0,.1); }
.quick span { position: relative; width: 40px; height: 40px; display: grid; place-items: center; border-radius: 4px; }
.quick .on { background: #0572ec; color: #fff; }
.on > svg:first-child { stroke: none; }
.quick svg { stroke-width: 1.9; }
.corner, .quick .corner { position: absolute; right: 5px; bottom: 5px; width: 6px; height: 6px; fill: currentColor; stroke: none; }
.pages { width: 780px; }
.sheet { background: #fff; height: 783px; padding: 90px 0 0 92px; color: #231f20; }
.sheet.prev { height: 30px; margin-bottom: 18px; padding: 0; }
h3 { font-family: Roboto, "Liberation Sans", sans-serif; font-stretch: 75%; font-weight: 700; font-size: 20px; line-height: 26px; letter-spacing: -.69px; word-spacing: 2.7px; margin-left: 29.5px; white-space: nowrap; }
.chart { display: flex; margin: 58px 0 0 27px; height: 332px; }
.slices { fill: none; stroke-width: 166; }
.nums { font: 12.5px Lato, sans-serif; fill: #000; stroke: none; text-anchor: middle; }
.legend { margin: 4px 0 0 22px; font: 12.5px Lato, sans-serif; letter-spacing: .12px; color: #000; }
.legend li { height: 24.9px; display: flex; align-items: center; gap: 3px; white-space: nowrap; }
.legend li::before { content: ""; width: 9px; height: 9px; background: var(--c); }
.c1 { --c: #406999; letter-spacing: -.1px; } .c2 { --c: #9e403c; } .c3 { --c: #7e9a45; } .c4 { --c: #695185; } .c5 { --c: #3c8da3; letter-spacing: -.1px; } .c6 { --c: #cb7b38; } .c7 { --c: #4f81bc; } .c8 { --c: #c0504d; } .c9 { --c: #9bbb59; letter-spacing: 0; } .c10 { --c: #8063a1; } .c11 { --c: #4aabc5; } .c12 { --c: #f79546; } .c13 { --c: #aabad7; }
.prose { width: 551px; margin-top: 37px; font-family: "Liberation Serif", serif; font-size: 19px; }
.prose p { line-height: 22.5px; height: 22.5px; text-align: justify; text-align-last: justify; white-space: normal; }
.prose .tight { letter-spacing: -.28px; }
.prose .snug { letter-spacing: -.02px; }
.prose .close-set { letter-spacing: -.15px; }
.doc-scroll { margin-left: auto; height: 100%; padding: 9px 0 7px; }
.doc-scroll b { height: 21px; margin-top: 163px; }

/* right rail */
.rail { width: 62px; display: flex; flex-direction: column; align-items: center; padding-top: 18px; font-size: 17px; }
.rail svg { stroke-width: 1.8; }
.rail > i { background: #dcdcdc; height: 1px; width: 40px; flex: none; }
.r-sum { color: #5258e4; }
.rail .l1 { margin-top: 18px; }
.r-com { margin-top: 18px; }
.r-grid { margin-top: 28px; }
.rail .l2 { height: 2px; margin-top: 20px; }
.pg { width: 40px; height: 40px; border: 1px solid #c8c8c8; border-radius: 5px; background: #fafafa; display: grid; place-items: center; margin-top: 198px; letter-spacing: -.9px; }
.tot { line-height: 24px; margin-top: 18px; letter-spacing: -.9px; }
.rail .r-up { margin-top: 23px; stroke-width: 2.6; }
.rail .r-dn { margin-top: 39px; stroke-width: 2.6; }
.rail .l3, .rail .l4 { width: 20px; }
.rail .l3 { margin-top: 26px; }
.r-sun, .r-fit { position: relative; width: 40px; display: grid; place-items: center; }
.r-sun { margin-top: 18px; }
.r-sun .corner, .r-fit .corner { right: 5px; bottom: -3px; }
.r-rot { margin-top: 27px; }
.r-fit { margin-top: 26px; }
.rail .l4 { margin-top: 18px; }
.r-zin { margin-top: 21px; }
.r-zout { margin-top: 28px; }

/* taskbar */
.taskbar { height: 60px; background: #202121; border-top: 1px solid #3d4240; display: flex; align-items: center; color: #fff; font-size: 15px; flex: none; }
.weather { width: 557px; padding: 0 0 4px 24px; display: flex; align-items: center; gap: 7px; letter-spacing: -.42px; }
.weather svg { stroke: none; margin-top: -7px; }
.ticks { stroke: #14608f; stroke-width: 1.5; }
.weather text { font-size: 14px; fill: #fff; text-anchor: middle; }
.weather p { line-height: 20px; }
.now { color: #c6c6c6; }
.apps { display: flex; align-items: center; }
.apps svg { stroke: none; }
.search { width: 273px; height: 38px; border-radius: 19px; background: #f2f2f2; margin: 0 4px 0 17px; display: flex; align-items: center; padding: 0 5px 0 13px; color: #5a5a5a; font-size: 17px; letter-spacing: -.47px; }
.search .mag { stroke: #222; stroke-width: 2; margin-right: 12px; }
.search .cover { stroke: #2f8d4c; stroke-width: 2; }
.search .lines { stroke: #98a5a0; stroke-width: 1.2; }
.art { margin-left: auto; }
.app { position: relative; width: 50px; height: 50px; margin: 0 5px 0 0; display: grid; place-items: center; border-radius: 5px; }
.app:nth-child(3) { margin-left: 3px; }
.app svg { width: 30px; height: 30px; }
.app .slot { stroke: #0a4d8a; stroke-width: 2; }
.app .handle { fill: none; stroke: #45bff5; stroke-width: 2; }
.app .rings { stroke: #666; stroke-width: 1.1; }
.app .frog { fill: none; stroke: #235c1e; stroke-width: 1.3; }
.app.cur { background: #2d2e2e; box-shadow: inset 0 0 0 1px #363737; }
.app.run::after, .app.cur::after { content: ""; position: absolute; bottom: 1px; left: 21px; width: 8px; height: 4px; border-radius: 2px; background: #999; }
.app.cur::after { left: 15px; width: 20px; background: #4cc2ff; }
.app em { position: absolute; right: 4px; top: 5px; width: 19px; height: 19px; border-radius: 50%; background: #c2185b; font: 600 11px/19px "Noto Sans", sans-serif; text-align: center; }
.app text { font: 700 12px "Noto Sans", sans-serif; fill: #fff; text-anchor: middle; }
.tray { margin-left: auto; display: flex; align-items: center; padding: 0 26px 2px 0; }
.tray svg { margin-right: 10px; stroke-width: 1.5; }
.tray .tc { margin-right: 22px; stroke-width: 2; }
.clock { width: 89px; text-align: right; letter-spacing: -.28px; margin-right: 10px; }
.clock p { line-height: 19px; }
.tray .bell { margin-right: 0; }
```
